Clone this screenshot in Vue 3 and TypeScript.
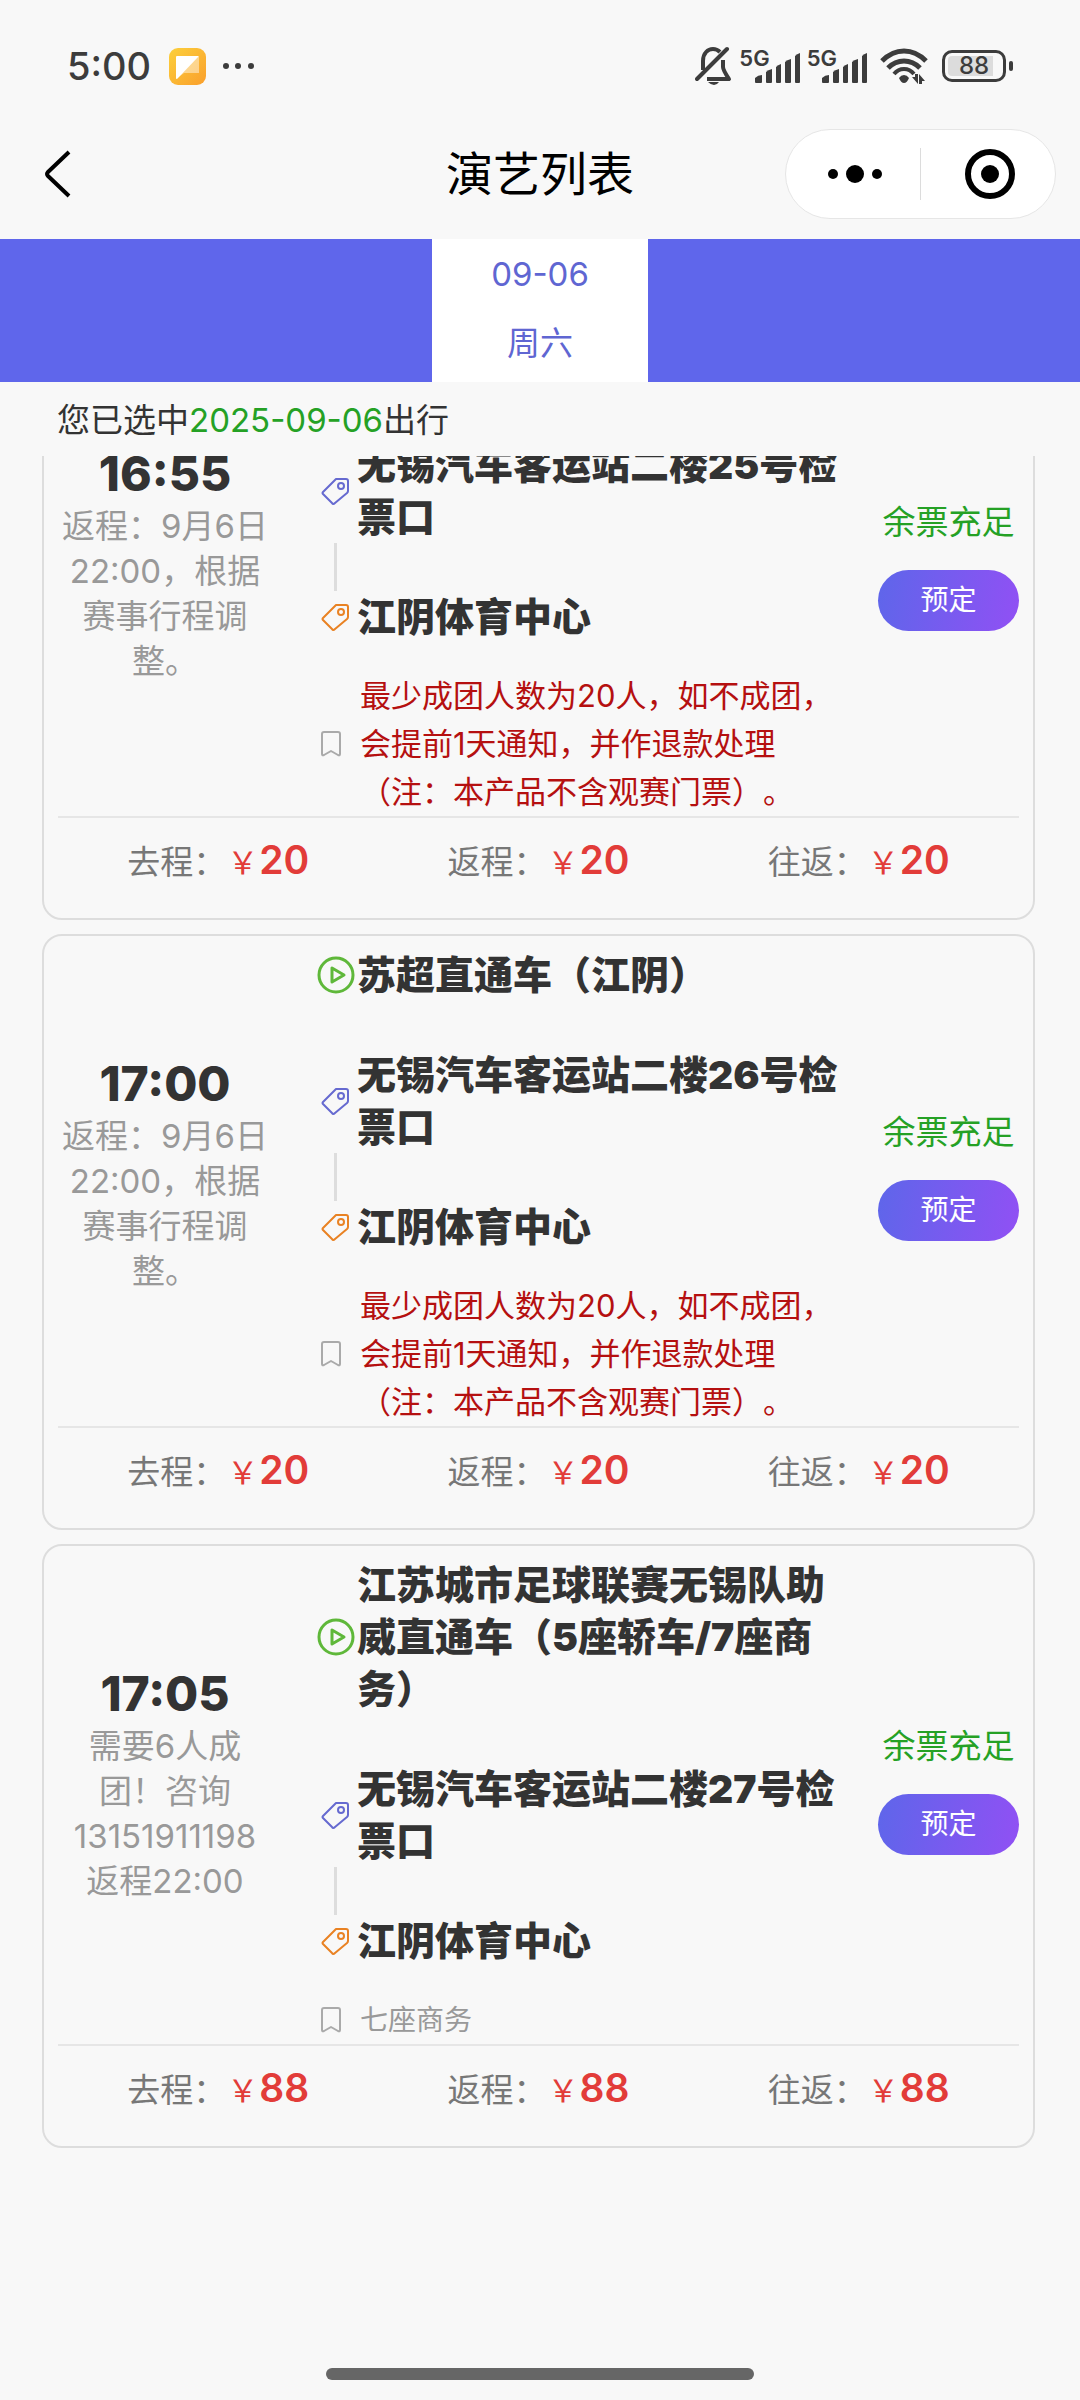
<script setup lang="ts">
interface Fare {
  label: string
  amount: number
}

interface Trip {
  id: number
  time: string
  remark: string
  title: string
  from: string
  to: string
  note: string
  highlight: boolean
  stock: string
  fares: Fare[]
}

const makeFares = (amount: number): Fare[] => [
  { label: '去程', amount },
  { label: '返程', amount },
  { label: '往返', amount },
]

const groupNote = '最少成团人数为20人，如不成团，\n会提前1天通知，并作退款处理\n（注：本产品不含观赛门票）。'
const returnRemark = '返程：9月6日\n22:00，根据\n赛事行程调\n整。'

const trips: Trip[] = [
  {
    id: 25,
    time: '16:55',
    remark: returnRemark,
    title: '',
    from: '无锡汽车客运站二楼25号检票口',
    to: '江阴体育中心',
    note: groupNote,
    highlight: true,
    stock: '余票充足',
    fares: makeFares(20),
  },
  {
    id: 26,
    time: '17:00',
    remark: returnRemark,
    title: '苏超直通车（江阴）',
    from: '无锡汽车客运站二楼26号检票口',
    to: '江阴体育中心',
    note: groupNote,
    highlight: true,
    stock: '余票充足',
    fares: makeFares(20),
  },
  {
    id: 27,
    time: '17:05',
    remark: '需要6人成\n团！咨询\n13151911198\n返程22:00',
    title: '江苏城市足球联赛无锡队助威直通车（5座轿车/7座商务）',
    from: '无锡汽车客运站二楼27号检票口',
    to: '江阴体育中心',
    note: '七座商务',
    highlight: false,
    stock: '余票充足',
    fares: makeFares(88),
  },
]
</script>

<template>
  <div class="page">
    <header class="status">
      <div class="status-side">
        <span class="clock">5:00</span>
        <svg class="app-icon" width="37" height="37" viewBox="0 0 37 37" aria-hidden="true">
          <defs>
            <linearGradient id="appBg" x1="0" y1="0" x2="1" y2="1">
              <stop offset="0" stop-color="#fcd03c" />
              <stop offset="1" stop-color="#fa9f2c" />
            </linearGradient>
          </defs>
          <rect width="37" height="37" rx="9" fill="url(#appBg)" />
          <path d="M7 9h23v16H15l-8 6z" fill="#fff" opacity=".45" />
          <path d="M8 8h22L8 31q-1 0-1-1V9q0-1 1-1z" fill="#fff" />
        </svg>
        <svg width="32" height="8" viewBox="0 0 32 8" fill="#3c3c3c" aria-hidden="true">
          <circle cx="4" cy="4" r="3" /><circle cx="16" cy="4" r="3" /><circle cx="29" cy="4" r="3" />
        </svg>
      </div>
      <div class="status-side">
        <svg class="bell" width="37" height="40" viewBox="0 0 37 40" fill="none" stroke="#3c3c3c" stroke-width="4" stroke-linejoin="round" aria-hidden="true">
          <path d="M2 33 32 3" stroke-linecap="round" />
          <path d="M8 24V15C8 7 13 3 18 3q4 0 7 3" />
          <path d="M28 14v7q0 3 6 12H12" />
          <path d="M13 36h11q-2 3-5 3t-6-3z" fill="#3c3c3c" stroke="none" />
        </svg>
        <span v-for="n in 2" :key="n" class="signal">
          <span class="network">5G</span>
          <svg class="bars" width="46" height="30" viewBox="0 0 46 30" fill="#3c3c3c" aria-hidden="true">
            <path d="M0 25q3-3 7-3v7q0 1-1 1H1q-1 0-1-1z" />
            <path d="M11 19q2-2 6-3v13q0 1-1 1h-4q-1 0-1-1z" />
            <path d="M21 14q2-2 5-3v18q0 1-1 1h-3q-1 0-1-1z" />
            <path d="M30 9q2-2 6-3v23q0 1-1 1h-4q-1 0-1-1z" />
            <path d="M40 3q2-2 5-3v29q0 1-1 1h-3q-1 0-1-1z" />
          </svg>
        </span>
        <svg class="wifi" width="48" height="38" viewBox="0 0 48 38" fill="none" stroke="#3c3c3c" aria-hidden="true">
          <path d="M2 14Q12 4 24 4t22 10" stroke-width="5" />
          <path d="M8 21q7-7 16-7t16 7" stroke-width="5" />
          <path d="M14 27q4-5 10-5t10 5" stroke-width="4" />
          <path d="M19 31q2-3 5-3t5 3q-2 5-5 5t-5-5z" fill="#3c3c3c" stroke="none" />
          <path d="M32 30h3v-3h3v10zM45 34h-3v3h-3V27z" fill="#3c3c3c" stroke="none" />
        </svg>
        <span class="battery"><span class="battery-level">88</span></span>
      </div>
    </header>

    <nav class="nav">
      <button class="back" type="button" aria-label="返回">
        <svg width="28" height="48" viewBox="0 0 28 48" fill="none" stroke="#000" stroke-width="4" stroke-linejoin="round" aria-hidden="true">
          <path d="M25 2 4 22q-2 2 0 4l21 20" />
        </svg>
      </button>
      <h1 class="nav-title">演艺列表</h1>
      <div class="capsule">
        <button class="capsule-more" type="button" aria-label="更多">
          <svg width="56" height="20" viewBox="0 0 56 20" aria-hidden="true">
            <circle cx="6" cy="10" r="5" /><circle cx="28" cy="10" r="9" /><circle cx="50" cy="10" r="5" />
          </svg>
        </button>
        <i class="capsule-line"></i>
        <button class="capsule-close" type="button" aria-label="关闭">
          <svg width="50" height="50" viewBox="0 0 50 50" aria-hidden="true">
            <circle cx="25" cy="25" r="22" fill="none" stroke="#000" stroke-width="6" /><circle cx="25" cy="25" r="9" />
          </svg>
        </button>
      </div>
    </nav>

    <div class="dates">
      <button class="date" type="button"><span>09-06</span><span>周六</span></button>
    </div>

    <p class="chosen">您已选中<em>2025-09-06</em>出行</p>

    <main class="viewport">
      <div class="list">
        <article v-for="trip in trips" :key="trip.id" class="card">
          <div class="body">
            <div class="depart">
              <time class="time">{{ trip.time }}</time>
              <p class="remark">{{ trip.remark }}</p>
            </div>

            <div class="route">
              <div class="stop">
                <svg width="38" height="38" viewBox="0 0 38 38" fill="none" stroke="#5fb83a" stroke-width="3" stroke-linejoin="round" aria-hidden="true">
                  <circle cx="19" cy="19" r="17" />
                  <path d="M15 12v14l12-7z" />
                </svg>
                <h2 v-if="trip.title">{{ trip.title }}</h2>
              </div>
              <div class="gap"></div>
              <div class="stop">
                <svg class="tag" width="28" height="28" viewBox="0 0 28 28" fill="none" stroke="#666ad0" stroke-width="2" stroke-linejoin="round" aria-hidden="true">
                  <path d="M15 2h10q2 0 2 2v10q0 1-1 2L14 26q-2 2-3 0l-9-9q-1-1 0-2L14 3z" />
                  <circle cx="20" cy="9" r="3" />
                </svg>
                <h2>{{ trip.from }}</h2>
              </div>
              <div class="gap"><i class="link"></i></div>
              <div class="stop">
                <svg class="tag" width="28" height="28" viewBox="0 0 28 28" fill="none" stroke="#e98223" stroke-width="2" stroke-linejoin="round" aria-hidden="true">
                  <path d="M15 2h10q2 0 2 2v10q0 1-1 2L14 26q-2 2-3 0l-9-9q-1-1 0-2L14 3z" />
                  <circle cx="20" cy="9" r="3" />
                </svg>
                <h2>{{ trip.to }}</h2>
              </div>
              <div class="note" :class="{ warn: trip.highlight }">
                <svg width="20" height="26" viewBox="0 0 20 26" fill="none" stroke="#aaa" stroke-width="2" stroke-linejoin="round" aria-hidden="true">
                  <path d="M3 1h14q2 0 2 2v20q0 2-2 1l-7-4-7 4q-2 1-2-1V3q0-2 2-2z" />
                </svg>
                <p>{{ trip.note }}</p>
              </div>
            </div>

            <div class="booking">
              <span class="stock">{{ trip.stock }}</span>
              <button class="book" type="button">预定</button>
            </div>
          </div>

          <div class="fares">
            <span v-for="fare in trip.fares" :key="fare.label" class="fare">
              {{ fare.label }}：<span class="yen">￥</span><strong>{{ fare.amount }}</strong>
            </span>
          </div>
        </article>
      </div>
    </main>

    <div class="home-bar"></div>
  </div>
</template>

<style>
body {
  background: #f8f8f8;
}
</style>

<style scoped>
.page {
  display: flex;
  flex-direction: column;
  min-height: 100vh;
  box-sizing: border-box;
  padding-bottom: 20px;
  background: #f8f8f8;
  color: #333;
  font-family: Inter, "Noto Sans CJK SC", sans-serif;
  font-size: 33px;
  text-spacing-trim: space-all;
}
h1,
h2,
p {
  margin: 0;
}
button {
  padding: 0;
  border: 0;
  background: none;
  color: inherit;
  font: inherit;
}
svg {
  display: block;
  flex: none;
}

.status {
  display: flex;
  justify-content: space-between;
  padding: 44px 74px 41px 67px;
}
.status-side {
  display: flex;
  align-items: center;
  height: 44px;
}
.clock {
  width: 102px;
  color: #3c3c3c;
  font-size: 38px;
  font-weight: 500;
}
.app-icon {
  margin-right: 16px;
}
.bell {
  margin-right: 7px;
}
.signal {
  display: flex;
  align-items: flex-end;
  height: 34px;
  margin-right: 6px;
}
.network {
  align-self: flex-start;
  color: #3c3c3c;
  font-size: 22px;
  font-weight: 600;
  line-height: 18px;
}
.bars {
  margin-left: -15px;
}
.wifi {
  margin: 0 14px 0 6px;
}
.battery {
  position: relative;
  display: flex;
  box-sizing: border-box;
  width: 64px;
  height: 32px;
  padding: 3px;
  border: 3px solid #3c3c3c;
  border-radius: 10px;
}
.battery::after {
  content: "";
  position: absolute;
  top: 8px;
  right: -10px;
  width: 4px;
  height: 10px;
  border-radius: 2px;
  background: #3c3c3c;
}
.battery-level {
  flex: 1;
  border-radius: 4px;
  background: linear-gradient(90deg, #dcdcdc 86%, transparent 86%);
  color: #3c3c3c;
  font-size: 24px;
  font-weight: 500;
  line-height: 20px;
  text-align: center;
}

.nav {
  display: grid;
  grid-template-columns: 1fr auto 1fr;
  align-items: center;
  padding: 0 24px 20px 44px;
}
.back {
  justify-self: start;
}
.nav-title {
  color: #000;
  font-size: 47px;
  font-weight: 400;
  line-height: 60px;
  padding-right: 20px;
}
.capsule {
  justify-self: end;
  display: flex;
  align-items: center;
  box-sizing: border-box;
  width: 271px;
  height: 90px;
  border: 1px solid #e6e6e6;
  border-radius: 45px;
  background: #fff;
}
.capsule button {
  flex: 1;
  display: flex;
  justify-content: center;
}
.capsule .capsule-more,
.capsule .capsule-close {
  padding-left: 3px;
}
.capsule-line {
  width: 1px;
  height: 52px;
  background: #dcdcdc;
}

.dates {
  display: flex;
  justify-content: center;
  background: #5f66eb;
}
.date {
  display: flex;
  flex-direction: column;
  align-items: center;
  width: 20%;
  background: #fff;
  color: #5f66d2;
  line-height: 69px;
  padding: 1px 0 4px;
}

.chosen {
  padding: 14px 57px 12px;
  line-height: 48px;
}
.chosen em {
  color: #25a125;
  font-style: normal;
}

.viewport {
  overflow: hidden;
}
.list {
  display: flex;
  flex-direction: column;
  gap: 14px;
  margin-top: -132px;
  padding: 0 45px 0 42px;
}
.card {
  padding: 0 14px;
  border: 2px solid #ddd;
  border-radius: 20px;
}
.body {
  display: grid;
  grid-template-columns: 214px minmax(0, 1fr) 141px;
  border-bottom: 2px solid #e6e6e6;
}
.depart {
  padding-top: 118px;
  text-align: center;
}
.time {
  display: block;
  font-size: 48px;
  font-weight: 800;
  line-height: 60px;
}
.remark {
  color: #999;
  line-height: 45px;
  white-space: pre-line;
}

.route {
  padding: 13px 36px 0 45px;
}
.stop {
  display: flex;
  align-items: center;
  gap: 2px;
  min-height: 52px;
}
.stop h2 {
  font-size: 39px;
  font-weight: 900;
  line-height: 52px;
}
.tag {
  margin: 0 6px 0 4px;
}
.gap {
  display: flex;
  justify-content: center;
  width: 37px;
  height: 48px;
}
.link {
  width: 3px;
  background: #ddd;
}
.note {
  display: flex;
  align-items: center;
  gap: 19px;
  padding: 29px 0 0 4px;
  color: #999;
  font-size: 28px;
  line-height: 48px;
  white-space: pre-line;
}
.note.warn {
  color: #b51010;
  font-size: 31px;
}

.booking {
  display: flex;
  flex-direction: column;
  align-items: center;
  justify-content: center;
  gap: 24px;
  padding-bottom: 14px;
}
.stock {
  color: #25a125;
  line-height: 48px;
}
.book {
  width: 100%;
  border-radius: 31px;
  background: linear-gradient(100deg, #5e66ea, #9150f4);
  color: #fff;
  font-size: 28px;
  line-height: 61px;
}

.fares {
  display: grid;
  grid-template-columns: repeat(3, 1fr);
  padding: 14px 0 26px;
  color: #777;
}
.fare {
  line-height: 60px;
  text-align: center;
}
.yen,
.fare strong {
  color: #e23c39;
  line-height: 40px;
}
.yen {
  padding: 0 1px;
  font-size: 31px;
}
.fare strong {
  font-size: 39px;
  font-weight: 600;
}

.home-bar {
  width: 428px;
  height: 12px;
  margin: auto auto 0;
  border-radius: 6px;
  background: #666;
}
</style>
